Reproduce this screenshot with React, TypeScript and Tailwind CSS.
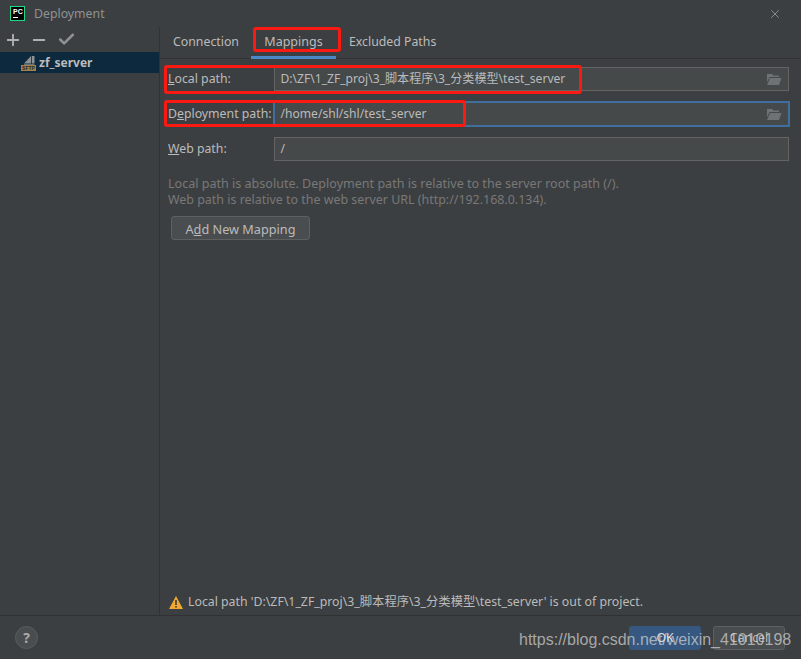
import { Check, Minus, Plus, X } from 'lucide-react';

const FONT = { fontFamily: '"Noto Sans", "Noto Sans CJK SC", sans-serif' };

function FolderIcon() {
    return (
        <svg width="16" height="13" viewBox="0 0 16 13" className="shrink-0">
            <path d="M1 1h5l1.500 1.500H13V4H3.500L1 9.500z" fill="#6e7274" />
            <path d="M4 5h11.500L13 12H1z" fill="#6e7274" />
        </svg>
    );
}

function SftpIcon() {
    return (
        <svg width="15" height="16" viewBox="0 0 15 16" className="shrink-0">
            <path d="M3 8.500L10 1v7.500z" fill="#8b9195" />
            <rect x="10.800" y="1" width="2.700" height="7.500" fill="#8b9195" />
            <rect x="3" y="9.300" width="10.500" height="0.800" fill="#8b9195" />
            <rect x="0" y="10" width="15" height="6" fill="#a7824a" />
            <text x="7.500" y="15.200" fontSize="5" fontWeight="700" textAnchor="middle" fill="#1f2a33" fontFamily="Liberation Sans">SFTP</text>
        </svg>
    );
}

function PathRow({ label, hotkey, rest, value, focused, browse }: { label?: string; hotkey: string; rest: string; value: string; focused?: boolean; browse?: boolean }) {
    return (
        <div className="flex items-center h-[24px]">
            <div className="w-[106px] shrink-0 pb-[1px] whitespace-nowrap text-[#bbbbbb]">
                {label}<span className="underline">{hotkey}</span>{rest}
            </div>
            <div className={`flex-1 h-full flex items-center justify-between pl-[5.500px] pr-[6px] bg-[#45494a] text-[#bbbbbb] border ${focused ? 'border-[#3f6f9f] outline outline-1 outline-[#3f6f9f]' : 'border-[#646464]'}`}>
                <span className="pb-[1px] text-[12.100px]">{value}</span>
                {browse && <FolderIcon />}
            </div>
        </div>
    );
}

export default function App() {
    return (
        <div className="relative w-[801px] h-[659px] overflow-hidden flex flex-col bg-[#3c3f41] text-[12.300px] leading-[16px]" style={FONT}>
            {/* title bar */}
            <div className="h-[27px] shrink-0 flex items-center pl-[10px] pr-[19px]">
                <div className="w-[15px] h-[15px] bg-black border border-[#21d789] flex flex-col pl-[2px] pt-[1px]">
                    <span className="text-[7px] leading-[8px] font-bold text-white" style={{ fontFamily: 'Liberation Sans' }}>PC</span>
                    <span className="w-[5px] h-[1px] mt-[1px] bg-white" />
                </div>
                <span className="ml-[9px] text-[#8f9294]">Deployment</span>
                <X size={14} strokeWidth={1.200} className="ml-auto text-[#a8abad]" />
            </div>

            <div className="flex-1 flex min-h-0 border-b border-[#2f3133]">
                {/* sidebar */}
                <div className="w-[160px] shrink-0 border-r border-[#323232]">
                    <div className="h-[25px] flex items-center pl-[4px] text-[#afb1b3]">
                        <Plus size={18} strokeWidth={2.500} />
                        <Minus size={18} strokeWidth={2.500} className="ml-[8px]" />
                        <Check size={19} strokeWidth={3.200} className="ml-[9px] text-[#8f9193]" />
                    </div>
                    <div className="h-[21px] flex items-center pl-[21px] bg-[#0d293e]">
                        <SftpIcon />
                        <span className="ml-[3px] text-[12px] font-bold text-[#bbbbbb]">zf_server</span>
                    </div>
                </div>

                {/* mappings panel */}
                <div className="flex-1 flex flex-col min-w-0">
                    <div className="h-[32px] shrink-0 flex pl-[1px] border-b border-[#323232] text-[#bbbbbb]">
                        <div className="w-[90px] flex items-center justify-center pb-[2px]">Connection</div>
                        <div className="w-[85px] flex items-center justify-center h-[32px] border-b-[3px] border-[#4a88c7] text-[12.500px]">Mappings</div>
                        <div className="ml-[13px] flex items-center pb-[2px]">Excluded Paths</div>
                    </div>

                    <div className="flex-1 flex flex-col pt-[8px] pl-[8px] pr-[12px]">
                        <div className="flex flex-col gap-[11px]">
                            <PathRow hotkey="L" rest="ocal path:" value="D:\ZF\1_ZF_proj\3_脚本程序\3_分类模型\test_server" browse />
                            <PathRow label="D" hotkey="e" rest="ployment path:" value="/home/shl/shl/test_server" focused browse />
                            <PathRow hotkey="W" rest="eb path:" value="/" />
                        </div>
                        <p className="mt-[15px] text-[12.550px] text-[#787878]">Local path is absolute. Deployment path is relative to the server root path (/).</p>
                        <p className="text-[12.450px] text-[#787878]">Web path is relative to the web server URL (http://192.168.0.134).</p>
                        <button className="mt-[8px] ml-[3px] w-[139px] h-[24px] pt-[1px] rounded-[3px] border border-[#5e6060] bg-[#4a4d4f] text-[12.700px] text-[#bbbbbb]">
                            A<span className="underline">d</span>d New Mapping
                        </button>
                        <div className="mt-auto mb-[5px] ml-[1px] flex items-center gap-[5px] text-[#bbbbbb]">
                            <svg width="14" height="13" viewBox="0 0 14 13" className="shrink-0">
                                <path d="M7 0L14 13H0z" fill="#f0a732" />
                                <rect x="6.200" y="4" width="1.600" height="5" fill="#3c3f41" />
                                <rect x="6.200" y="10" width="1.600" height="1.600" fill="#3c3f41" />
                            </svg>
                            <span>Local path 'D:\ZF\1_ZF_proj\3_脚本程序\3_分类模型\test_server' is out of project.</span>
                        </div>
                    </div>
                </div>
            </div>

            {/* footer */}
            <div className="h-[43px] shrink-0 flex items-center pl-[15px] pr-[16px]">
                <div className="w-[23px] h-[23px] rounded-full bg-[#4a4d4f] border border-[#5a5d5f] flex items-center justify-center font-bold text-[14px] text-[#a8aaac]">?</div>
                <button className="ml-auto w-[72px] h-[24px] rounded-[3px] bg-[#365880] text-[#d8dde2]">OK</button>
                <button className="ml-[12px] w-[72px] h-[24px] rounded-[3px] border border-[#5e6060] bg-[#4a4d4f] text-[#bbbbbb]">Cancel</button>
            </div>

            {/* red annotations */}
            <div className="absolute left-[253px] top-[27px] w-[88px] h-[25px] border-[3px] border-[#fb1a12] rounded-[3px]" />
            <div className="absolute left-[164px] top-[65px] w-[418px] h-[29px] border-[3px] border-[#fb1a12] rounded-[3px]" />
            <div className="absolute left-[164px] top-[100px] w-[302px] h-[27px] border-[3px] border-[#fb1a12] rounded-[3px]" />

            {/* watermark */}
            <div className="absolute left-[519px] top-[630px] text-[16px] leading-[20px] text-[#d8d8d8]/70 whitespace-nowrap" style={{ fontFamily: '"Liberation Sans", sans-serif' }}>
                https://blog.csdn.net/weixin_41010198
            </div>
        </div>
    );
}
